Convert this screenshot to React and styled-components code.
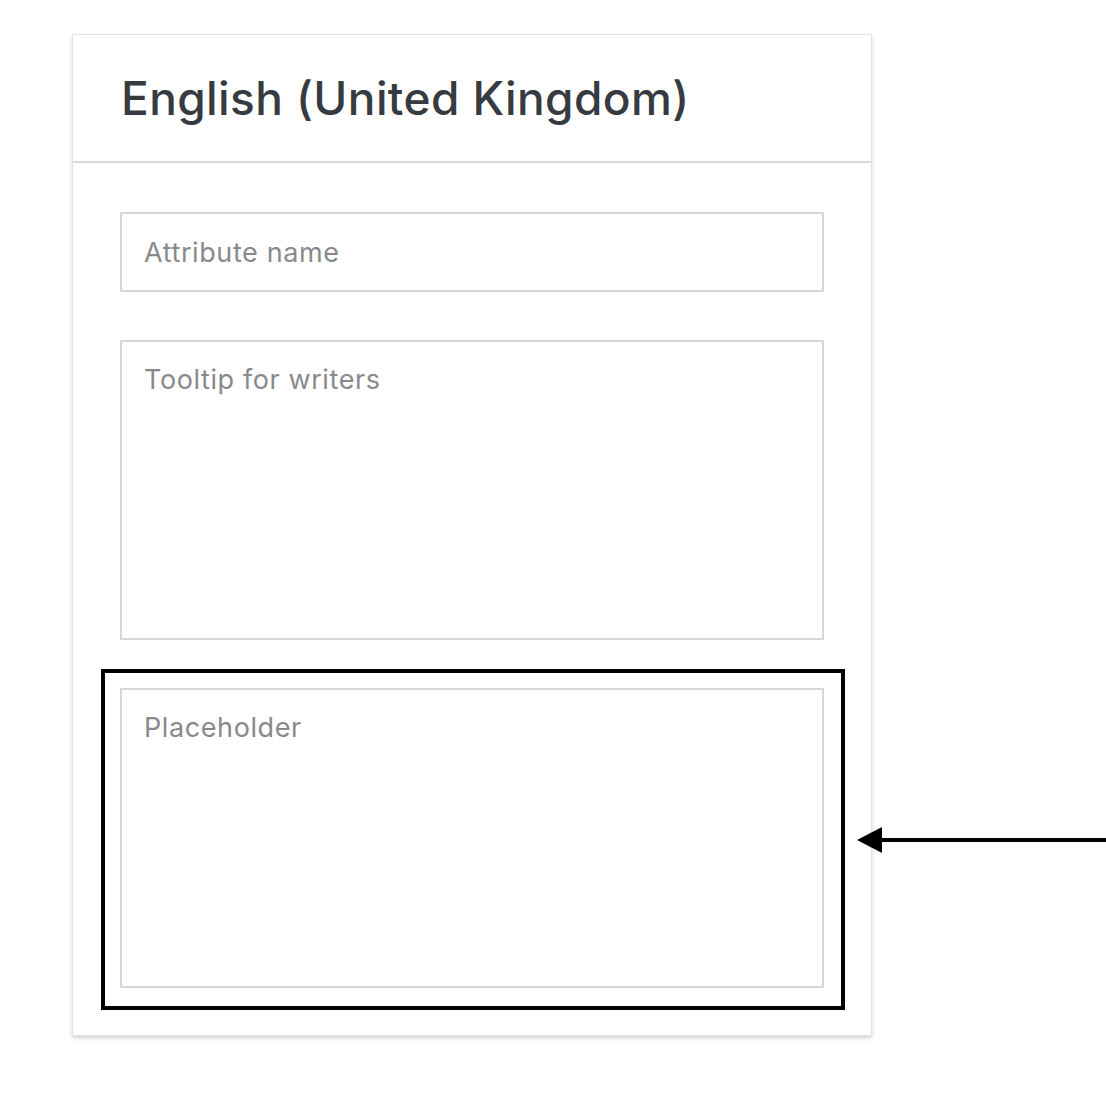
import React from 'react';
import styled, { createGlobalStyle } from 'styled-components';

const GlobalStyle = createGlobalStyle`
  html, body {
    margin: 0;
    padding: 0;
    background: #ffffff;
    font-family: Inter, "Noto Sans", sans-serif;
  }
`;

const Page = styled.div`
  position: relative;
  width: 1106px;
  height: 1102px;
  padding: 34px 0 0 72px;
  box-sizing: border-box;
  overflow: hidden;
`;

const Card = styled.section`
  width: 800px;
  background: #ffffff;
  border: 1px solid #e2e2e2;
  box-sizing: border-box;
  box-shadow: 0 2px 4px rgba(0, 0, 0, 0.18);
`;

const Header = styled.div`
  height: 128px;
  display: flex;
  align-items: center;
  padding: 0 48px;
  border-bottom: 2px solid #d9d9d9;
  box-sizing: border-box;
`;

const Title = styled.h2`
  margin: 0;
  font-size: 46px;
  font-weight: 500;
  color: #363a41;
  letter-spacing: 0.4px;
`;

const Body = styled.div`
  display: flex;
  flex-direction: column;
  gap: 48px;
  padding: 49px 47px 47px 47px;
`;

const Field = styled.div`
  position: relative;
`;

const fieldText = `
  font-family: Inter, sans-serif;
  font-size: 27px;
  letter-spacing: 0.6px;
  color: #333;
  border: 2px solid #d6d6d6;
  border-radius: 0;
  box-sizing: border-box;
  outline: none;

  &::placeholder {
    color: #88898d;
  }
`;

const Input = styled.input`
  ${fieldText}
  display: block;
  width: 100%;
  height: 80px;
  padding: 0 22px;
`;

const TextArea = styled.textarea`
  ${fieldText}
  display: block;
  width: 100%;
  height: ${p => p.$height}px;
  padding: 20px 22px;
  line-height: 36px;
  resize: none;
`;

const Highlight = styled.div`
  position: absolute;
  left: -19px;
  top: -19px;
  right: -21px;
  bottom: -22px;
  border: 4px solid #000;
  pointer-events: none;
`;

const Arrow = styled.svg`
  position: absolute;
  left: 856px;
  top: 826px;
`;

export default function App() {
  return (
    <>
      <GlobalStyle />
      <Page>
        <Card>
          <Header>
            <Title>English (United Kingdom)</Title>
          </Header>
          <Body>
            <Field>
              <Input placeholder="Attribute name" />
            </Field>
            <Field>
              <TextArea $height={300} placeholder="Tooltip for writers" />
            </Field>
            <Field>
              <TextArea $height={300} placeholder="Placeholder" />
              <Highlight />
            </Field>
          </Body>
        </Card>
        <Arrow width="250" height="28" viewBox="0 0 250 28">
          <line x1="20" y1="14" x2="250" y2="14" stroke="#000" strokeWidth="4" />
          <polygon points="1,14 26,1 26,27" fill="#000" />
        </Arrow>
      </Page>
    </>
  );
}
